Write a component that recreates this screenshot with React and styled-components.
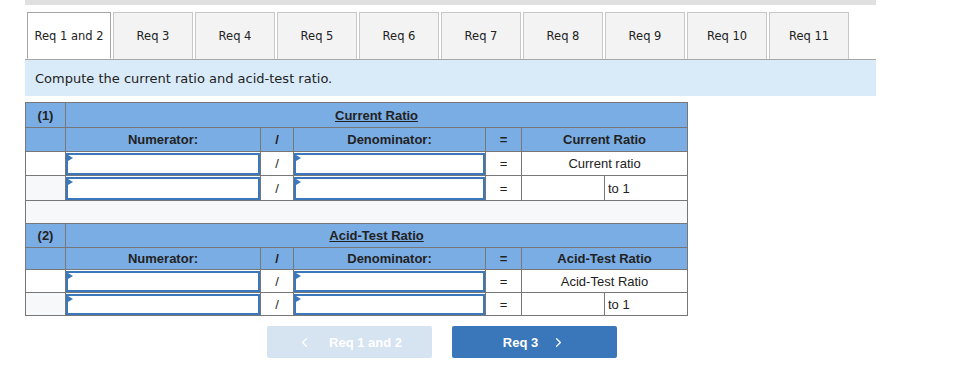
import React from "react";
import styled, { createGlobalStyle } from "styled-components";
import { ChevronLeft, ChevronRight } from "lucide-react";

const GlobalStyle = createGlobalStyle`
  body {
    margin: 0;
    background: #fff;
    font-family: "Liberation Sans", Arial, sans-serif;
  }
`;

const Page = styled.div`
  padding: 0 25px;
  width: 851px;
`;

const TopBar = styled.div`
  height: 5px;
  background: #e0e0e0;
`;

const TabStrip = styled.div`
  display: flex;
  gap: 2px;
  margin-top: 7px;
  padding-left: 2px;
  border-bottom: 1px solid #a6a6a6;
`;

const Tab = styled.div`
  box-sizing: border-box;
  width: ${(p) => (p.$wide ? "84px" : "80px")};
  height: 47px;
  display: flex;
  align-items: center;
  justify-content: center;
  font-family: "DejaVu Sans", Verdana, sans-serif;
  font-size: 11.5px;
  color: #222;
  background: ${(p) => (p.$active ? "#fff" : "#f3f3f3")};
  border: 1px solid ${(p) => (p.$active ? "#a6a6a6" : "#c8c8c8")};
  border-bottom: ${(p) => (p.$active ? "1px solid #fff" : "none")};
  margin-bottom: ${(p) => (p.$active ? "-1px" : "0")};
`;

const Prompt = styled.div`
  height: 36px;
  display: flex;
  align-items: center;
  padding-left: 10px;
  background: #d9ebf9;
  font-family: "DejaVu Sans", Verdana, sans-serif;
  font-size: 13px;
  color: #222;
`;

const Grid = styled.table`
  margin-top: 6px;
  border-collapse: collapse;
  table-layout: fixed;
  width: 662px;
  font-size: 13px;
  line-height: 15px;
  color: #222;
`;

const Cell = styled.td`
  border: 1px solid #777;
  padding: 0;
  height: ${(p) => (p.$h ? `${p.$h}px` : "auto")};
  text-align: ${(p) => p.$align || "center"};
  padding-left: ${(p) => (p.$align === "left" ? "3px" : "0")};
  font-weight: ${(p) => (p.$bold ? 700 : 400)};
  background: ${(p) => p.$bg || "#fff"};
`;

const Title = styled.span`
  text-decoration: underline;
`;

const InputWrap = styled.div`
  position: relative;

  &::before {
    content: "";
    position: absolute;
    left: 2px;
    top: 2px;
    border-left: 5px solid #3b77bb;
    border-top: 3px solid transparent;
    border-bottom: 3px solid transparent;
  }
`;

const Field = styled.input`
  display: block;
  box-sizing: border-box;
  width: 100%;
  height: ${(p) => p.$h}px;
  border: 2px solid #3b77bb;
  background: #fff;
  outline: none;
`;

const Nav = styled.div`
  display: flex;
  gap: 20px;
  margin-top: 10px;
  padding-left: 242px;
`;

const NavButton = styled.button`
  width: 165px;
  height: 32px;
  border: none;
  border-radius: 2px;
  display: flex;
  align-items: center;
  justify-content: center;
  gap: ${(p) => (p.$disabled ? "17px" : "13px")};
  font-family: "Liberation Sans", Arial, sans-serif;
  font-size: 13px;
  font-weight: 700;
  color: #fff;
  background: ${(p) => (p.$disabled ? "#d6e3f1" : "#3a76ba")};
`;

const BLUE = "#7aade4";
const SOFT = "#f7f8fa";

const tabs = ["Req 3", "Req 4", "Req 5", "Req 6", "Req 7", "Req 8", "Req 9", "Req 10", "Req 11"];

const InputCell = ({ h }) => (
  <Cell $h={h}>
    <InputWrap>
      <Field $h={h - 1} />
    </InputWrap>
  </Cell>
);

const RatioBlock = ({ num, title, result, heights }) => (
  <>
    <tr>
      <Cell $h={heights[0]} $bg={BLUE} $bold>({num})</Cell>
      <Cell $bg={BLUE} $bold colSpan={6}>
        <Title>{title}</Title>
      </Cell>
    </tr>
    <tr>
      <Cell $h={heights[1]} $bg={BLUE} />
      <Cell $bg={BLUE} $bold>Numerator:</Cell>
      <Cell $bg={BLUE} $bold>/</Cell>
      <Cell $bg={BLUE} $bold>Denominator:</Cell>
      <Cell $bg={BLUE} $bold>=</Cell>
      <Cell $bg={BLUE} $bold colSpan={2}>{title}</Cell>
    </tr>
    <tr>
      <Cell $h={heights[2]} />
      <InputCell h={heights[2]} />
      <Cell>/</Cell>
      <InputCell h={heights[2]} />
      <Cell>=</Cell>
      <Cell colSpan={2}>{result}</Cell>
    </tr>
    <tr>
      <Cell $h={heights[3]} $bg={SOFT} />
      <InputCell h={heights[3]} />
      <Cell>/</Cell>
      <InputCell h={heights[3]} />
      <Cell>=</Cell>
      <Cell />
      <Cell $align="left">to 1</Cell>
    </tr>
  </>
);

const App = () => {
  return (
    <>
      <GlobalStyle />
      <Page>
        <TopBar />
        <TabStrip>
          <Tab $active $wide>Req 1 and 2</Tab>
          {tabs.map((t) => (
            <Tab key={t}>{t}</Tab>
          ))}
        </TabStrip>
        <Prompt>Compute the current ratio and acid-test ratio.</Prompt>
        <Grid>
          <colgroup>
            <col style={{ width: 40 }} />
            <col style={{ width: 195 }} />
            <col style={{ width: 33 }} />
            <col style={{ width: 192 }} />
            <col style={{ width: 36 }} />
            <col style={{ width: 83 }} />
            <col style={{ width: 83 }} />
          </colgroup>
          <tbody>
            <RatioBlock
              num={1}
              title="Current Ratio"
              result="Current ratio"
              heights={[24, 23, 23, 24]}
            />
            <tr>
              <Cell $h={22} $bg={SOFT} colSpan={7} />
            </tr>
            <RatioBlock
              num={2}
              title="Acid-Test Ratio"
              result="Acid-Test Ratio"
              heights={[23, 21, 22, 22]}
            />
          </tbody>
        </Grid>
        <Nav>
          <NavButton $disabled>
            <ChevronLeft size={15} strokeWidth={2} />
            Req 1 and 2
          </NavButton>
          <NavButton>
            Req 3
            <ChevronRight size={15} strokeWidth={2} />
          </NavButton>
        </Nav>
      </Page>
    </>
  );
};

export default App;
